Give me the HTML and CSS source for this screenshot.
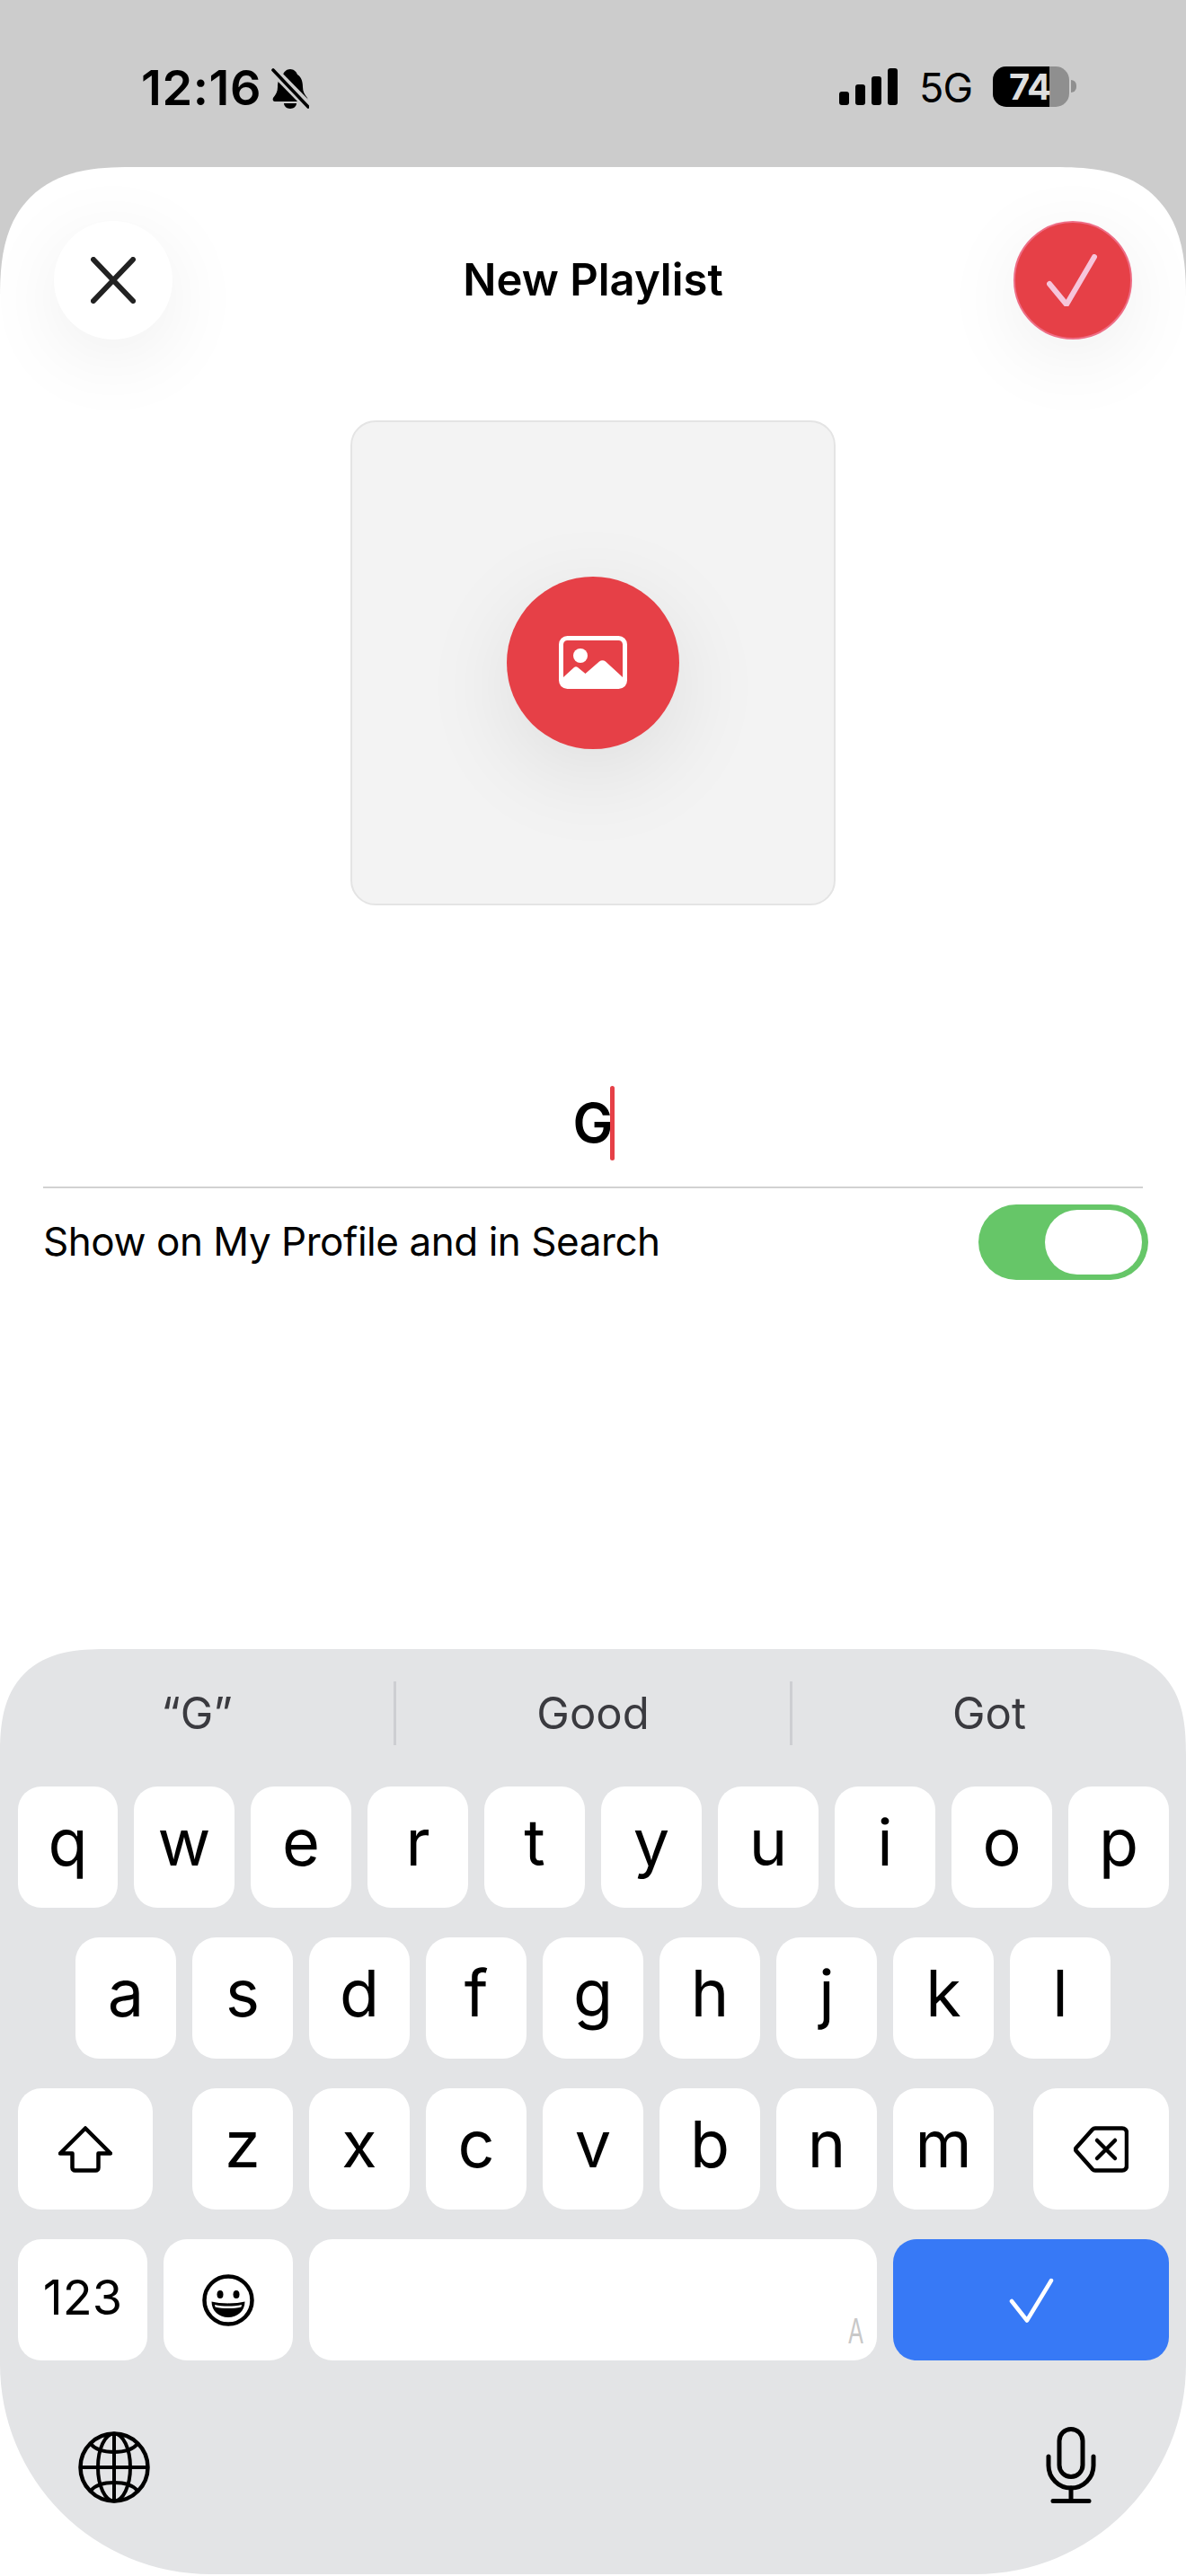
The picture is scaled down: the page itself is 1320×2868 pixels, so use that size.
FILE: index.html
```html
<!DOCTYPE html>
<html lang="en">
<head>
<meta charset="utf-8">
<title>New Playlist</title>
<link rel="stylesheet" href="styles.css">
</head>
<body>
<div class="screen">
  <header class="status">
    <div class="status-left">
      <span class="time">12:16</span>
      <svg class="bell" viewBox="0 0 42 45" width="42" height="45">
        <path d="M21 1c4 0 7 3 8 6 5 3 6 9 6 14 0 5 2 8 5 12 1 2 0 4-2 4H4c-2 0-3-2-2-4 3-4 5-7 5-12 0-5 1-11 6-14 1-3 4-6 8-6z" fill="#000"/>
        <path d="M14 39h14c0 3-3 6-7 6s-7-3-7-6z" fill="#000"/>
        <path d="M0 0L42 43" stroke="#ccc" stroke-width="10"/>
        <path d="M2 2L41 43" stroke="#000" stroke-width="3.6" stroke-linecap="round"/>
      </svg>
    </div>
    <div class="status-right">
      <div class="signal"><i class="b1"></i><i class="b2"></i><i class="b3"></i><i class="b4"></i></div>
      <span class="net">5G</span>
      <div class="battery"><div class="battery-fill"></div><span class="battery-num">74</span><div class="battery-nub"></div></div>
    </div>
  </header>

  <main class="sheet">
    <div class="nav">
      <button class="round close" aria-label="Close">
        <svg viewBox="0 0 50 52" width="50" height="52"><path d="M3 3L47 49M47 3L3 49" stroke="#222" stroke-width="6" stroke-linecap="round" fill="none"/></svg>
      </button>
      <h1 class="title">New Playlist</h1>
      <button class="round confirm" aria-label="Done">
        <svg viewBox="0 0 58 58" width="58" height="58"><path d="M3 33L22 56L53 3" stroke="#f6c5da" stroke-width="6" stroke-linecap="round" stroke-linejoin="round" fill="none"/></svg>
      </button>
    </div>

    <div class="art">
      <div class="art-btn">
        <svg viewBox="0 0 76 59" width="76" height="59">
          <rect x="2.500" y="2.500" width="71" height="54" rx="7" fill="none" stroke="#fff" stroke-width="5"/>
          <circle cx="24" cy="22" r="8" fill="#fff"/>
          <path d="M5 46L17 35Q19 33.500 21 35L29.500 42L45 28.500Q48.500 26 52 28.500L71 46V53Q71 57 67 57H9Q5 57 5 53Z" fill="#fff"/>
        </svg>
      </div>
    </div>

    <div class="field">
      <span class="field-text">G<span class="caret"></span></span>
    </div>

    <div class="visibility">
      <span class="visibility-label">Show on My Profile and in Search</span>
      <div class="toggle"><div class="thumb"></div></div>
    </div>

    <section class="keyboard">
      <div class="suggestions">
        <div class="sugg">“G”</div>
        <div class="sugg">Good</div>
        <div class="sugg">Got</div>
      </div>
      <div class="rows">
        <div class="row row-top">
          <div class="key">q</div><div class="key">w</div><div class="key">e</div><div class="key">r</div><div class="key">t</div><div class="key">y</div><div class="key">u</div><div class="key">i</div><div class="key">o</div><div class="key">p</div>
        </div>
        <div class="row row-mid">
          <div class="key">a</div><div class="key">s</div><div class="key">d</div><div class="key">f</div><div class="key">g</div><div class="key">h</div><div class="key">j</div><div class="key">k</div><div class="key">l</div>
        </div>
        <div class="row">
          <div class="key key-shift">
            <svg viewBox="0 0 60 52" width="60" height="52"><path d="M30 2.500L58 30.500H44.500V46.500A3 3 0 0 1 41.500 49.500H18.500A3 3 0 0 1 15.500 46.500V30.500H2Z" fill="none" stroke="#000" stroke-width="4.500" stroke-linejoin="round"/></svg>
          </div>
          <div class="key">z</div><div class="key">x</div><div class="key">c</div><div class="key">v</div><div class="key">b</div><div class="key">n</div><div class="key">m</div>
          <div class="key key-del">
            <svg viewBox="0 0 61 52" width="61" height="52"><path d="M24 2.500H54A5 5 0 0 1 59 7.500V44.500A5 5 0 0 1 54 49.500H24A4 4 0 0 1 21 48.200L3 28A3 3 0 0 1 3 24L21 3.800A4 4 0 0 1 24 2.500Z" fill="none" stroke="#000" stroke-width="4.500" stroke-linejoin="round"/><path d="M26 16L46 36M46 16L26 36" stroke="#000" stroke-width="4.500" stroke-linecap="round"/></svg>
          </div>
        </div>
        <div class="row">
          <div class="key key-num">123</div>
          <div class="key key-emoji">
            <svg viewBox="0 0 58 58" width="58" height="58">
              <circle cx="29" cy="29" r="26.500" fill="none" stroke="#000" stroke-width="4.500"/>
              <ellipse cx="20" cy="22.500" rx="3.500" ry="4.500"/>
              <ellipse cx="38" cy="22.500" rx="3.500" ry="4.500"/>
              <path d="M10.500 30.500C20 33 38 33 47.500 30.500C47.500 41 39 48 29 48S10.500 41 10.500 30.500Z"/>
              <path d="M14 34C23 36 35 36 44 34L43.500 36.500C35 38.500 23 38.500 14.500 36.500Z" fill="#fff"/>
            </svg>
          </div>
          <div class="key key-space"><span class="space-mark">A</span></div>
          <div class="key key-return">
            <svg viewBox="0 0 50 50" width="50" height="50"><path d="M3 26L20 47.500L47 3" fill="none" stroke="#fff" stroke-width="4.500" stroke-linecap="round" stroke-linejoin="round"/></svg>
          </div>
        </div>
      </div>
      <div class="kb-bottom">
        <svg class="globe" viewBox="0 0 80 80" width="80" height="80" fill="none" stroke="#000" stroke-width="4">
          <circle cx="40" cy="40" r="37.500" stroke-width="4.500"/>
          <ellipse cx="40" cy="40" rx="18" ry="37.500"/>
          <path d="M40 2.500V77.500M2.500 40H77.500"/>
          <path d="M14 14C24 26 56 26 66 14"/>
          <path d="M14 66C24 54 56 54 66 66"/>
        </svg>
        <svg class="mic" viewBox="0 0 56 85" width="56" height="85" fill="none" stroke="#000" stroke-width="5" stroke-linecap="round">
          <rect x="15" y="2.500" width="26" height="53" rx="13"/>
          <path d="M3 33V43A25 25 0 0 0 53 43V33"/>
          <path d="M28 68V82M8 82.500H48"/>
        </svg>
      </div>
    </section>
  </main>
</div>
</body>
</html>
```

FILE: styles.css
```css
* { box-sizing: border-box; }
html, body { margin: 0; padding: 0; }
body {
  width: 1320px;
  height: 2868px;
  background: #ccc;
  font-family: Inter, "Liberation Sans", sans-serif;
  color: #000;
  overflow: hidden;
}
.screen { display: flex; flex-direction: column; height: 2868px; }

/* status bar */
.status {
  height: 186px;
  flex: none;
  display: flex;
  justify-content: space-between;
  align-items: flex-start;
  padding: 74px 130px 0 157px;
}
.status-left { display: flex; align-items: flex-start; gap: 11px; }
.time { font-size: 54px; font-weight: 600; line-height: 48px; letter-spacing: 0.6px; }
.bell { margin-top: 2px; }
.status-right { display: flex; align-items: flex-start; }
.signal { display: flex; align-items: flex-end; gap: 6.500px; height: 41px; margin-top: 2px; }
.signal i { display: block; width: 11.500px; background: #000; border-radius: 3px; }
.b1 { height: 15px; }
.b2 { height: 23px; }
.b3 { height: 32px; }
.b4 { height: 41px; }
.net { font-size: 45px; line-height: 48px; margin: 0 23px 0 24px; letter-spacing: -1px; }
.battery {
  position: relative;
  width: 85px;
  height: 45px;
  border-radius: 15px;
  background: #8f8f8f;
}
.battery-fill { position: absolute; left: 0; top: 0; bottom: 0; width: 63px; background: #000; border-radius: 15px 0 0 15px; }
.battery-num { position: absolute; left: 18px; top: 0; font-size: 40px; line-height: 45px; font-weight: 700; color: #dedede; letter-spacing: -1px; }
.battery-nub { position: absolute; right: -8px; top: 15px; width: 6px; height: 14px; border-radius: 0 6px 6px 0; background: #8f8f8f; }

/* sheet */
.sheet {
  flex: 1;
  display: flex;
  flex-direction: column;
  background: #fff;
  border-radius: 146px 146px 0 0;
  corner-shape: superellipse(1.4);
  overflow: hidden;
}
.nav {
  display: flex;
  justify-content: space-between;
  align-items: center;
  padding: 60px 60px 0;
}
.round {
  width: 132px;
  height: 132px;
  border: 0;
  padding: 0;
  border-radius: 50%;
  display: flex;
  align-items: center;
  justify-content: center;
  box-shadow: 0 20px 90px rgba(0, 0, 0, 0.07);
}
.close { background: #fff; }
.confirm { background: #e64047; border: 2px solid #ee6d85; }
.title { margin: 0; font-size: 49px; font-weight: 600; line-height: 60px; }

.art {
  width: 540px;
  height: 540px;
  margin: 90px auto 0;
  background: #f3f3f3;
  border: 2px solid #e4e4e4;
  border-radius: 28px;
  display: flex;
  align-items: center;
  justify-content: center;
}
.art-btn {
  width: 192px;
  height: 192px;
  border-radius: 50%;
  background: #e64047;
  display: flex;
  align-items: center;
  justify-content: center;
  box-shadow: 0 26px 104px rgba(0, 0, 0, 0.09);
}
.art-btn svg { margin-top: -2px; }

.field {
  margin: 0 48px;
  height: 315px;
  border-bottom: 2px solid #d2d2d2;
  display: flex;
  justify-content: center;
  align-items: flex-end;
  padding-bottom: 34px;
}
.field-text { position: relative; font-size: 60px; font-weight: 600; line-height: 73px; }
.caret { position: absolute; left: calc(100% - 3px); top: -5px; width: 5px; height: 83px; border-radius: 3px; background: #e64047; }

.visibility {
  display: flex;
  justify-content: space-between;
  align-items: center;
  padding: 18px 42px 0 48px;
}
.visibility-label { font-size: 44px; line-height: 84px; letter-spacing: -0.45px; margin-top: -3px; }
.toggle { position: relative; width: 189px; height: 84px; border-radius: 42px; background: #66c668; }
.thumb { position: absolute; right: 7px; top: 6px; width: 108px; height: 72px; border-radius: 36px; background: #fff; }

/* keyboard */
.keyboard {
  margin-top: auto;
  margin-bottom: 2px;
  height: 1030px;
  background: #e3e4e6;
  border-radius: 118px 118px 234px 234px;
  corner-shape: superellipse(1.4) superellipse(1.4) round round;
}
.suggestions { display: flex; padding-top: 36px; }
.sugg {
  flex: 1;
  height: 71px;
  display: flex;
  align-items: center;
  justify-content: center;
  font-size: 49px;
  color: #3a3a3f;
  border-left: 3px solid #cdced2;
}
.sugg:first-child { border-left: 0; }
.rows { margin-top: 46px; display: flex; flex-direction: column; gap: 33px; }
.row { display: flex; gap: 18px; padding-left: 20px; }
.row-top .key:first-child { width: 111px; }
.row-mid { padding-left: 84px; }
.key {
  width: 112px;
  height: 135px;
  border-radius: 26px;
  background: #fff;
  display: flex;
  align-items: center;
  justify-content: center;
  font-size: 72px;
  line-height: 1;
  padding-bottom: 12px;
}
.key-shift { width: 150px; margin-right: 26px; padding-bottom: 0; }
.key-del { width: 151px; margin-left: 26px; padding-bottom: 0; }
.key-num { width: 144px; font-size: 54px; padding-bottom: 6px; }
.key-emoji { width: 144px; padding-bottom: 0; }
.key-space { position: relative; width: 632px; }
.key-return { width: 307px; background: #3779f6; padding-bottom: 0; }
.space-mark {
  position: absolute;
  right: 15px;
  bottom: 13px;
  font-family: "Liberation Sans", sans-serif;
  font-size: 40px;
  line-height: 40px;
  color: #c8c8c8;
  transform: scaleX(0.62);
  transform-origin: right bottom;
}
.kb-bottom {
  display: flex;
  justify-content: space-between;
  align-items: flex-end;
  margin-top: 74px;
  padding: 0 100px 0 87px;
}
```
